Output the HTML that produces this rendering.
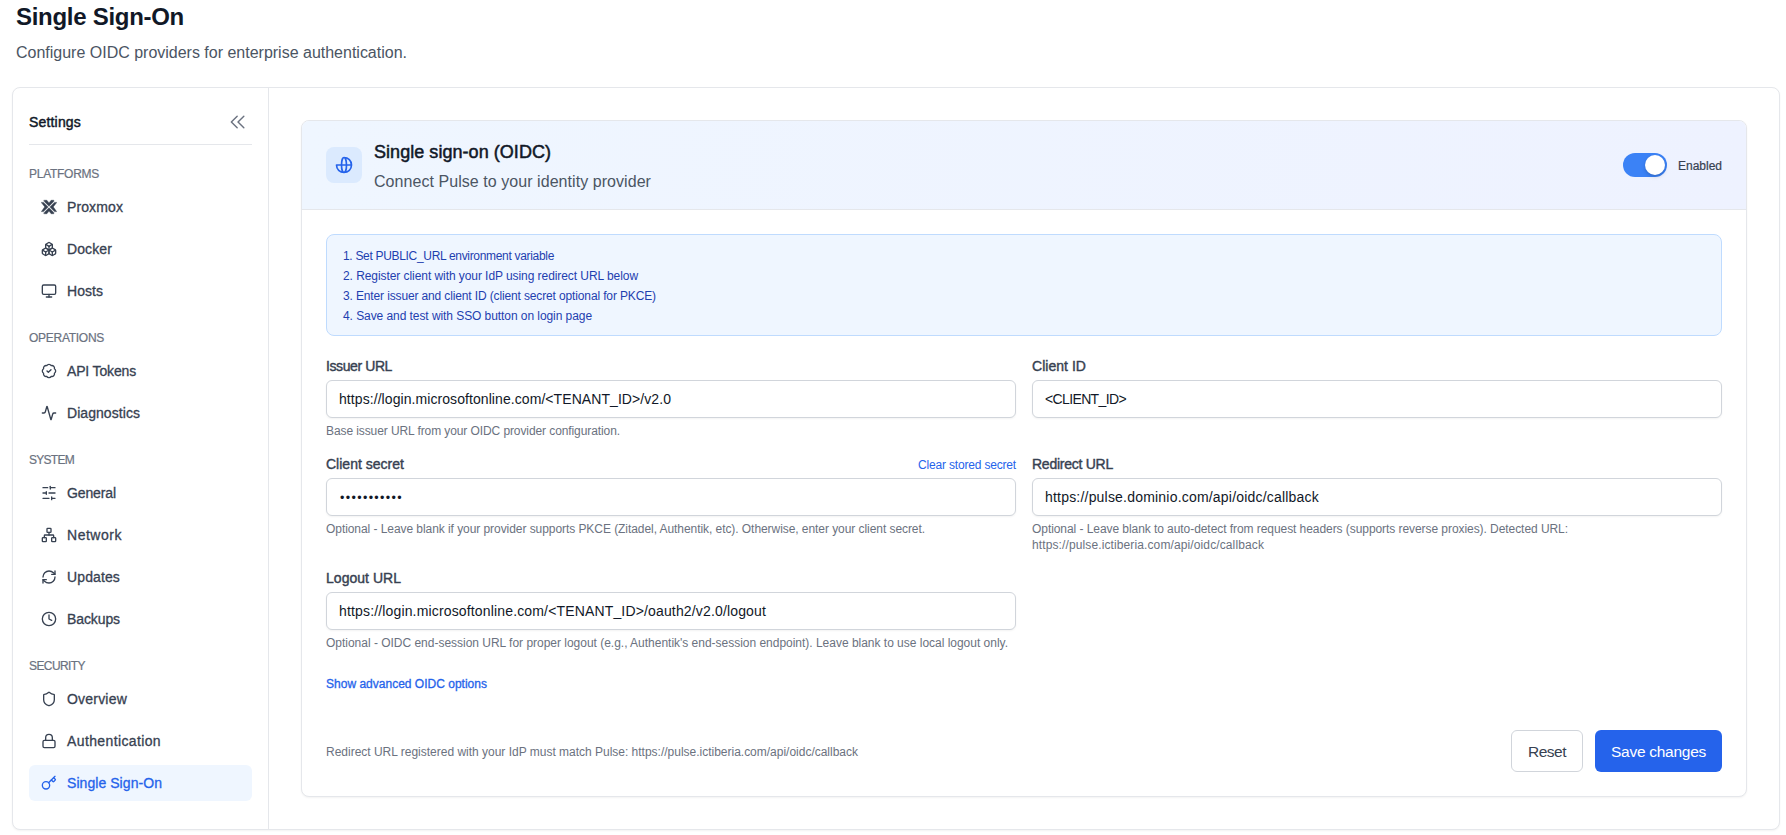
<!DOCTYPE html>
<html lang="en">
<head>
<meta charset="utf-8">
<title>Single Sign-On</title>
<style>
*{box-sizing:border-box;margin:0;padding:0}
html,body{width:1786px;height:835px;overflow:hidden;background:#fff}
body{font-family:"Liberation Sans",sans-serif;color:#111827;position:relative;-webkit-font-smoothing:antialiased}
h1,h2,h3,p,label,a,span,li,button{white-space:nowrap}
ul,ol{list-style:none}
a{text-decoration:none;cursor:pointer}
button{font-family:inherit;background:none;border:0;cursor:pointer}
svg{display:block;width:100%;height:100%;fill:none;stroke:currentColor;stroke-width:2;stroke-linecap:round;stroke-linejoin:round}

/* page header */
.ph{position:absolute;left:16px;top:0}
.pt{position:absolute;left:0;top:3px;font-size:24px;line-height:28px;font-weight:700;color:#111827}
.ps{position:absolute;left:0;top:42px;font-size:16px;line-height:22px;font-weight:400;color:#4b5563}

/* shell */
.shell{position:absolute;left:12px;top:87px;width:1768px;height:743px;border:1px solid #e5e7eb;border-radius:8px;background:#fff;box-shadow:0 1px 2px rgba(0,0,0,.05)}
.side{position:absolute;left:0;top:0;width:256px;height:741px;border-right:1px solid #e5e7eb;padding:0 16px}
.sh{position:relative;height:57px;border-bottom:1px solid #e5e7eb}
.st{position:absolute;left:0;top:24px;font-size:14px;line-height:20px;font-weight:400;color:#111827;-webkit-text-stroke:.45px #111827}
.cb{position:absolute;right:4px;top:24px;width:20px;height:20px;color:#6b7280;padding:0}
.cb svg{stroke-width:1.7}
nav{padding-top:20px}
.ng{margin-bottom:20px}
.nh{display:block;position:relative;top:1px;width:max-content;font-size:12px;line-height:16px;height:16px;font-weight:400;color:#6b7280;-webkit-text-stroke:.2px #6b7280;margin-bottom:8px}
.ng ul{display:block}
.ni{position:relative;height:36px;margin-bottom:6px;border-radius:6px;color:#374151}
.ni:last-child{margin-bottom:0}
.ni .ic{position:absolute;left:12px;top:10px;width:16px;height:16px}
.ni .nl{position:absolute;left:38px;top:8px;font-size:14px;line-height:20px;font-weight:400;-webkit-text-stroke:.3px currentColor}
.ni.on{background:#eff6ff;color:#2563eb}

/* main */
.main{position:absolute;left:256px;top:0;width:1510px;height:741px}
.card{position:absolute;left:32px;top:32px;width:1446px;height:677px;border:1px solid #e5e7eb;border-radius:8px;background:#fff;box-shadow:0 1px 2px rgba(0,0,0,.05);overflow:hidden}
.ch{position:absolute;left:0;top:0;width:1444px;height:89px;border-bottom:1px solid #e5e7eb;background:linear-gradient(90deg,#eff6ff,#eef2ff)}
.gi{position:absolute;left:24px;top:26px;width:36px;height:36px;border-radius:8px;background:#dbeafe;color:#2563eb;padding:8px}
.ct{position:absolute;left:72px;top:0}
.c1{position:absolute;left:0;top:17px;font-size:18px;line-height:28px;font-weight:400;color:#111827;-webkit-text-stroke:.5px #111827}
.c2{position:absolute;left:0;top:50px;font-size:16px;line-height:22px;color:#4b5563}
.tg{position:absolute;right:24px;top:32px;height:24px;width:99px}
.sw{position:absolute;left:0;top:0;width:44px;height:24px;border-radius:12px;background:#3b82f6}
.sw i{position:absolute;right:2px;top:2px;width:20px;height:20px;border-radius:50%;background:#fff;box-shadow:0 2px 4px rgba(0,0,0,.14),0 1px 2px rgba(0,0,0,.08)}
.en{position:absolute;left:55px;top:5px;font-size:12px;line-height:16px;color:#374151;-webkit-text-stroke:.2px #374151}

.cb2{position:absolute;left:24px;top:90px;width:1396px}
.info{position:absolute;left:0;top:23px;width:1396px;height:102px;border:1px solid #bfdbfe;border-radius:8px;background:#eff6ff;padding:11px 16px 9px;color:#1e40af;font-size:12px;line-height:20px}
.info li{height:20px}
.grid{position:absolute;left:0;top:-1px;width:1396px}
.fld{position:absolute;width:690px}
.f1{left:0;top:146px}.f2{left:706px;top:146px}
.f3{left:0;top:244px}.f4{left:706px;top:244px}
.f5{left:0;top:358px}
.lr{position:relative;height:20px;margin-bottom:4px}
.lb{position:absolute;left:0;top:0;font-size:14px;line-height:20px;color:#374151;-webkit-text-stroke:.4px #374151}
.lk{position:absolute;right:0;top:3px;font-size:12px;line-height:16px;color:#2563eb}
.inp{position:relative;height:38px;border:1px solid #d1d5db;border-radius:6px;background:#fff;box-shadow:0 1px 2px rgba(0,0,0,.05)}
.iv{position:absolute;left:12px;top:8px;font-size:14px;line-height:20px;color:#111827}
.pw .iv{font-size:12.5px;left:13px;top:9px}
.bt span{position:relative;top:1px}
.hp{margin-top:5px;font-size:12px;line-height:16px;color:#6b7280}
.adv{position:absolute;left:0;top:465px;font-size:12px;line-height:16px;color:#2563eb;-webkit-text-stroke:.3px #2563eb}
.ft{position:absolute;left:0;top:519px;width:1396px;height:42px}
.fn{position:absolute;left:0;top:14px;font-size:12px;line-height:16px;color:#6b7280}
.bt{position:absolute;right:0;top:0;height:42px}
.b1{position:absolute;right:139px;top:0;width:72px;height:42px;border:1px solid #d1d5db;border-radius:6px;background:#fff;font-size:15.5px;color:#374151}
.b2{position:absolute;right:0;top:0;width:127px;height:42px;border-radius:6px;background:#2563eb;font-size:15.5px;color:#fff}

</style>
</head>
<body>
<header class="ph">
  <h1 id="t17" class="pt" style="letter-spacing:-0.286px">Single Sign-On</h1>
  <p id="t18" class="ps" style="letter-spacing:-0.006px">Configure OIDC providers for enterprise authentication.</p>
</header>
<div class="shell">
  <aside class="side">
    <div class="sh"><h2 id="t19" class="st" style="letter-spacing:0.176px">Settings</h2><button class="cb" aria-label="Collapse sidebar"><svg viewBox="0 0 24 24"><path d="M11 19l-7-7 7-7m8 14l-7-7 7-7"/></svg></button></div>
    <nav><div class="ng"><h3 id="t4" class="nh" style="letter-spacing:-0.273px">PLATFORMS</h3><ul><li class="ni"><span class="ic"><svg viewBox="0 0 24 24" style="fill:currentColor;stroke:currentColor;stroke-width:.7;stroke-linejoin:round"><path d="M4.7 1.9H8.8L12 5.9l3.200-4H19.300L19.100 3.800 12 10.900 4.900 3.800z"/><path d="M4.700 22.100H8.800L12 18.100l3.200 4H19.300L19.100 20.200 12 13.100 4.900 20.200z"/><path d="M.6 5.100H3.700L10.600 12 3.700 18.900H.6L5.500 12z"/><path d="M23.400 5.100H20.300L13.400 12l6.900 6.900H23.400L18.500 12z"/></svg></span><span id="t1" class="nl" style="letter-spacing:0.109px">Proxmox</span></li><li class="ni"><span class="ic"><svg viewBox="0 0 24 24"><path d="M2.970 12.920A2 2 0 0 0 2 14.630v3.240a2 2 0 0 0 .97 1.710l3 1.800a2 2 0 0 0 2.060 0L12 19v-5.500l-5-3-4.030 2.420Z"/><path d="m7 16.500-4.740-2.850"/><path d="m7 16.500 5-3"/><path d="M7 16.500v5.170"/><path d="M12 13.500V19l3.970 2.380a2 2 0 0 0 2.060 0l3-1.800a2 2 0 0 0 .97-1.710v-3.240a2 2 0 0 0-.97-1.710L17 10.500l-5 3Z"/><path d="m17 16.500-5-3"/><path d="m17 16.500 4.740-2.850"/><path d="M17 16.500v5.170"/><path d="M7.970 4.420A2 2 0 0 0 7 6.130v4.370l5 3 5-3V6.130a2 2 0 0 0-.97-1.710l-3-1.800a2 2 0 0 0-2.060 0l-3 1.800Z"/><path d="M12 8 7.260 5.150"/><path d="m12 8 4.740-2.850"/><path d="M12 13.500V8"/></svg></span><span id="t2" class="nl" style="letter-spacing:0.107px">Docker</span></li><li class="ni"><span class="ic"><svg viewBox="0 0 24 24"><rect width="20" height="14" x="2" y="3" rx="2"/><line x1="8" x2="16" y1="21" y2="21"/><line x1="12" x2="12" y1="17" y2="21"/></svg></span><span id="t3" class="nl" style="letter-spacing:0.041px">Hosts</span></li></ul></div><div class="ng"><h3 id="t7" class="nh" style="letter-spacing:-0.280px">OPERATIONS</h3><ul><li class="ni"><span class="ic"><svg viewBox="0 0 24 24"><path d="M3.850 8.620a4 4 0 0 1 4.780-4.770 4 4 0 0 1 6.740 0 4 4 0 0 1 4.780 4.780 4 4 0 0 1 0 6.740 4 4 0 0 1-4.770 4.780 4 4 0 0 1-6.750 0 4 4 0 0 1-4.780-4.770 4 4 0 0 1 0-6.760Z"/><path d="m9 12 2 2 4-4"/></svg></span><span id="t5" class="nl" style="letter-spacing:-0.156px">API Tokens</span></li><li class="ni"><span class="ic"><svg viewBox="0 0 24 24"><path d="M22 12h-2.480a2 2 0 0 0-1.930 1.460l-2.350 8.360a.25.25 0 0 1-.48 0L9.240 2.180a.25.25 0 0 0-.48 0l-2.350 8.360A2 2 0 0 1 4.490 12H2"/></svg></span><span id="t6" class="nl" style="letter-spacing:0.057px">Diagnostics</span></li></ul></div><div class="ng"><h3 id="t12" class="nh" style="letter-spacing:-0.724px">SYSTEM</h3><ul><li class="ni"><span class="ic"><svg viewBox="0 0 24 24"><line x1="21" x2="14" y1="4" y2="4"/><line x1="10" x2="3" y1="4" y2="4"/><line x1="21" x2="12" y1="12" y2="12"/><line x1="8" x2="3" y1="12" y2="12"/><line x1="21" x2="16" y1="20" y2="20"/><line x1="12" x2="3" y1="20" y2="20"/><line x1="14" x2="14" y1="2" y2="6"/><line x1="8" x2="8" y1="10" y2="14"/><line x1="16" x2="16" y1="18" y2="22"/></svg></span><span id="t8" class="nl" style="letter-spacing:-0.116px">General</span></li><li class="ni"><span class="ic"><svg viewBox="0 0 24 24"><rect x="16" y="16" width="6" height="6" rx="1"/><rect x="2" y="16" width="6" height="6" rx="1"/><rect x="9" y="2" width="6" height="6" rx="1"/><path d="M5 16v-3a1 1 0 0 1 1-1h12a1 1 0 0 1 1 1v3"/><path d="M12 12V8"/></svg></span><span id="t9" class="nl" style="letter-spacing:0.520px">Network</span></li><li class="ni"><span class="ic"><svg viewBox="0 0 24 24"><path d="M3 12a9 9 0 0 1 9-9 9.750 9.750 0 0 1 6.740 2.740L21 8"/><path d="M21 3v5h-5"/><path d="M21 12a9 9 0 0 1-9 9 9.750 9.750 0 0 1-6.740-2.740L3 16"/><path d="M8 16H3v5"/></svg></span><span id="t10" class="nl" style="letter-spacing:0.121px">Updates</span></li><li class="ni"><span class="ic"><svg viewBox="0 0 24 24"><circle cx="12" cy="12" r="10"/><polyline points="12 6 12 12 16 14"/></svg></span><span id="t11" class="nl" style="letter-spacing:-0.100px">Backups</span></li></ul></div><div class="ng"><h3 id="t16" class="nh" style="letter-spacing:-0.586px">SECURITY</h3><ul><li class="ni"><span class="ic"><svg viewBox="0 0 24 24"><path d="M20 13c0 5-3.500 7.500-7.660 8.950a1 1 0 0 1-.67-.010C7.500 20.500 4 18 4 13V6a1 1 0 0 1 1-1c2 0 4.500-1.200 6.240-2.720a1.170 1.170 0 0 1 1.520 0C14.510 3.810 17 5 19 5a1 1 0 0 1 1 1z"/></svg></span><span id="t13" class="nl" style="letter-spacing:0.205px">Overview</span></li><li class="ni"><span class="ic"><svg viewBox="0 0 24 24"><rect width="18" height="11" x="3" y="11" rx="2" ry="2"/><path d="M7 11V7a5 5 0 0 1 10 0v4"/></svg></span><span id="t14" class="nl" style="letter-spacing:0.376px">Authentication</span></li><li class="ni on"><span class="ic"><svg viewBox="0 0 24 24"><path d="m15.500 7.500 2.300 2.300a1 1 0 0 0 1.400 0l2.100-2.100a1 1 0 0 0 0-1.400L19 4"/><path d="m21 2-9.600 9.600"/><circle cx="7.500" cy="15.500" r="5.500"/></svg></span><span id="t15" class="nl" style="letter-spacing:0.059px">Single Sign-On</span></li></ul></div></nav>
  </aside>
  <main class="main">
    <section class="card">
      <div class="ch">
        <div class="gi"><svg viewBox="0 0 24 24"><path d="M21 12a9 9 0 0 1-9 9m9-9a9 9 0 0 0-9-9m9 9H3m9 9a9 9 0 0 1-9-9m9 9c1.657 0 3-4.030 3-9s-1.343-9-3-9m0 18c-1.657 0-3-4.030-3-9s1.343-9 3-9"/></svg></div>
        <div class="ct">
          <h3 id="t20" class="c1" style="letter-spacing:0.045px">Single sign-on (OIDC)</h3>
          <p id="t21" class="c2" style="letter-spacing:0.056px">Connect Pulse to your identity provider</p>
        </div>
        <div class="tg"><span class="sw"><i></i></span><span id="t22" class="en" style="letter-spacing:-0.007px">Enabled</span></div>
      </div>
      <div class="cb2">
        <ol class="info">
          <li><span id="t23" style="letter-spacing:-0.316px">1. Set PUBLIC_URL environment variable</span></li>
          <li><span id="t24" style="letter-spacing:-0.067px">2. Register client with your IdP using redirect URL below</span></li>
          <li><span id="t25" style="letter-spacing:-0.135px">3. Enter issuer and client ID (client secret optional for PKCE)</span></li>
          <li><span id="t26" style="letter-spacing:-0.069px">4. Save and test with SSO button on login page</span></li>
        </ol>
        <div class="grid">
          <div class="fld f1"><div class="lr"><label id="t27" class="lb" style="letter-spacing:-0.403px">Issuer URL</label></div><div class="inp"><span id="t28" class="iv" style="letter-spacing:0.073px">https://login.microsoftonline.com/&lt;TENANT_ID&gt;/v2.0</span></div><p class="hp"><span id="t29" style="letter-spacing:-0.093px">Base issuer URL from your OIDC provider configuration.</span></p></div>
          <div class="fld f2"><div class="lr"><label id="t30" class="lb" style="letter-spacing:0.035px">Client ID</label></div><div class="inp"><span id="t31" class="iv" style="letter-spacing:-0.631px">&lt;CLIENT_ID&gt;</span></div></div>
          <div class="fld f3"><div class="lr"><label id="t32" class="lb" style="letter-spacing:0.014px">Client secret</label><a id="t33" class="lk" style="letter-spacing:-0.178px">Clear stored secret</a></div><div class="inp pw"><span id="t34" class="iv" style="letter-spacing:1.351px">•••••••••••</span></div><p class="hp"><span id="t35" style="letter-spacing:-0.062px">Optional - Leave blank if your provider supports PKCE (Zitadel, Authentik, etc). Otherwise, enter your client secret.</span></p></div>
          <div class="fld f4"><div class="lr"><label id="t36" class="lb" style="letter-spacing:-0.253px">Redirect URL</label></div><div class="inp"><span id="t37" class="iv" style="letter-spacing:0.201px">https://pulse.dominio.com/api/oidc/callback</span></div><p class="hp"><span id="t38" style="letter-spacing:-0.063px">Optional - Leave blank to auto-detect from request headers (supports reverse proxies). Detected URL:</span><br><span id="t39" style="letter-spacing:0.116px">https://pulse.ictiberia.com/api/oidc/callback</span></p></div>
          <div class="fld f5"><div class="lr"><label id="t40" class="lb" style="letter-spacing:0.028px">Logout URL</label></div><div class="inp"><span id="t41" class="iv" style="letter-spacing:0.155px">https://login.microsoftonline.com/&lt;TENANT_ID&gt;/oauth2/v2.0/logout</span></div><p class="hp"><span id="t42" style="letter-spacing:-0.016px">Optional - OIDC end-session URL for proper logout (e.g., Authentik's end-session endpoint). Leave blank to use local logout only.</span></p></div>
        </div>
        <a id="t43" class="adv" style="letter-spacing:0.009px">Show advanced OIDC options</a>
        <div class="ft">
          <p id="t44" class="fn" style="letter-spacing:-0.009px">Redirect URL registered with your IdP must match Pulse: https://pulse.ictiberia.com/api/oidc/callback</p>
          <div class="bt">
            <button class="b1"><span id="t45" style="letter-spacing:-0.500px">Reset</span></button>
            <button class="b2"><span id="t46" style="letter-spacing:-0.271px">Save changes</span></button>
          </div>
        </div>
      </div>
    </section>
  </main>
</div>
</body>
</html>
